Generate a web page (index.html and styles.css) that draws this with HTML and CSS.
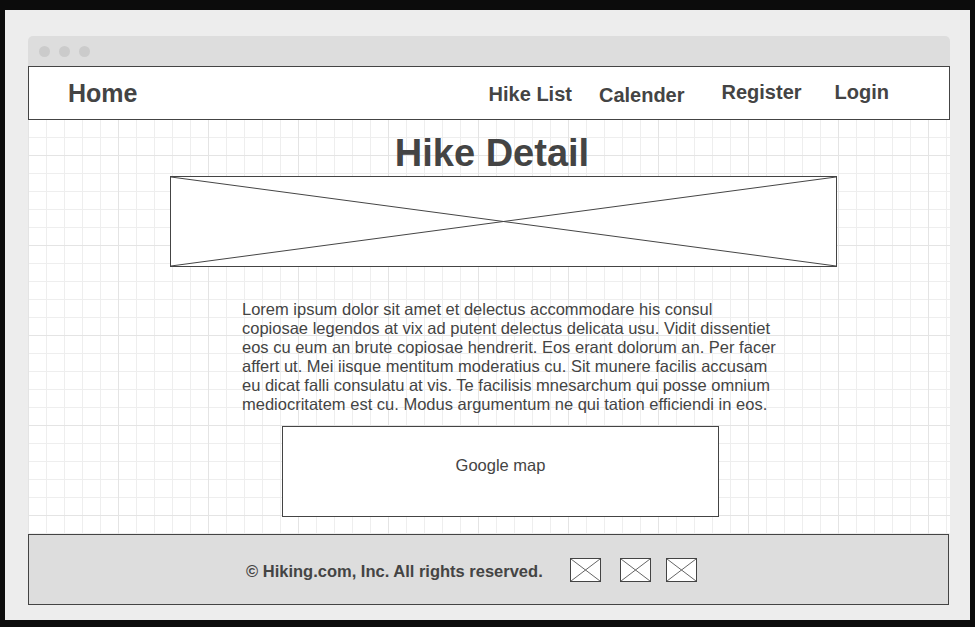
FILE: index.html
```html
<!DOCTYPE html>
<html lang="en">
<head>
<meta charset="utf-8">
<title>Hike Detail</title>
<link rel="stylesheet" href="styles.css">
</head>
<body>
<div class="screen">
  <div class="window">
    <div class="titlebar">
      <span class="dot"></span><span class="dot"></span><span class="dot"></span>
    </div>
    <nav class="nav">
      <a class="brand">Home</a>
      <div class="links">
        <a class="link link-hike">Hike List</a>
        <a class="link link-cal">Calender</a>
        <a class="link link-reg">Register</a>
        <a class="link link-login">Login</a>
      </div>
    </nav>
    <main class="canvas">
      <h1 class="title">Hike Detail</h1>
      <div class="hero">
        <svg class="cross" viewBox="0 0 100 100" preserveAspectRatio="none">
          <line x1="0" y1="0" x2="100" y2="100" vector-effect="non-scaling-stroke"/>
          <line x1="100" y1="0" x2="0" y2="100" vector-effect="non-scaling-stroke"/>
        </svg>
      </div>
      <p class="desc">Lorem ipsum dolor sit amet et delectus accommodare his consul<br>copiosae legendos at vix ad putent delectus delicata usu. Vidit dissentiet<br>eos cu eum an brute copiosae hendrerit. Eos erant dolorum an. Per facer<br>affert ut. Mei iisque mentitum moderatius cu. Sit munere facilis accusam<br>eu dicat falli consulatu at vis. Te facilisis mnesarchum qui posse omnium<br>mediocritatem est cu. Modus argumentum ne qui tation efficiendi in eos.</p>
      <div class="map">Google map</div>
    </main>
    <footer class="footer">
      <span class="copy">© Hiking.com, Inc. All rights reserved.</span>
      <span class="icon icon-1"><svg viewBox="0 0 100 100" preserveAspectRatio="none"><line x1="0" y1="0" x2="100" y2="100" vector-effect="non-scaling-stroke"/><line x1="100" y1="0" x2="0" y2="100" vector-effect="non-scaling-stroke"/></svg></span>
      <span class="icon icon-2"><svg viewBox="0 0 100 100" preserveAspectRatio="none"><line x1="0" y1="0" x2="100" y2="100" vector-effect="non-scaling-stroke"/><line x1="100" y1="0" x2="0" y2="100" vector-effect="non-scaling-stroke"/></svg></span>
      <span class="icon icon-3"><svg viewBox="0 0 100 100" preserveAspectRatio="none"><line x1="0" y1="0" x2="100" y2="100" vector-effect="non-scaling-stroke"/><line x1="100" y1="0" x2="0" y2="100" vector-effect="non-scaling-stroke"/></svg></span>
    </footer>
  </div>
</div>
</body>
</html>
```
FILE: styles.css
```css
* { box-sizing: border-box; }

html, body {
  margin: 0;
  padding: 0;
  background: #0c0c0c;
  font-family: "Liberation Sans", Arial, sans-serif;
  color: #444;
}

.screen {
  margin: 10px 5px 0 5px;
  width: 965px;
  height: 610px;
  background: #ededed;
  padding: 26px 0 0 23px;
}

.window {
  width: 922px;
}

.titlebar {
  height: 30px;
  background: #dddddd;
  border-radius: 5px 5px 0 0;
  display: flex;
  align-items: center;
  padding-left: 11px;
  gap: 9px;
}

.dot {
  width: 11px;
  height: 11px;
  border-radius: 50%;
  background: #cbcbcb;
}

.nav {
  height: 54px;
  width: 922px;
  border: 1px solid #444;
  background: #fff;
  display: flex;
  align-items: center;
  padding: 0 60px 0 39px;
}

.brand {
  font-weight: bold;
  font-size: 25px;
  line-height: 29px;
}

.links {
  margin-left: auto;
  display: flex;
  align-items: center;
}

.link {
  font-weight: bold;
  font-size: 20px;
  line-height: 23px;
}

.link-hike { margin-top: 2px; }
.link-cal { margin-left: 27px; margin-top: 4px; }
.link-reg { margin-left: 37px; margin-bottom: 1px; }
.link-login { margin-left: 33px; margin-bottom: 1px; }

.canvas {
  height: 414px;
  width: 922px;
  background-color: #fff;
  background-image:
    linear-gradient(to right, #e4e4e4 1px, transparent 1px),
    linear-gradient(to bottom, #e4e4e4 1px, transparent 1px),
    linear-gradient(to right, #eeeeee 1px, transparent 1px),
    linear-gradient(to bottom, #eeeeee 1px, transparent 1px);
  background-size: 90px 90px, 90px 90px, 18px 18px, 18px 18px;
  background-position: 0 0, 0 35px, 0 0, 0 -1px;
  display: flex;
  flex-direction: column;
  align-items: flex-start;
  padding-top: 11px;
}

.title {
  margin: 0;
  align-self: center;
  padding-left: 6px;
  font-size: 38px;
  line-height: 44px;
  font-weight: bold;
  color: #444;
}

.hero {
  margin: 1px 0 0 142px;
  width: 667px;
  height: 91px;
  border: 1px solid #444;
  background: #fff;
}

.cross {
  display: block;
  width: 100%;
  height: 100%;
}

.cross line, .icon line {
  stroke: #444;
  stroke-width: 1;
}

.desc {
  margin: 33px 0 0 214px;
  font-size: 16.5px;
  line-height: 19px;
  white-space: nowrap;
  color: #444;
}

.map {
  margin: 12px 0 0 254px;
  width: 437px;
  height: 91px;
  border: 1px solid #444;
  background: #fff;
  padding-top: 29px;
  text-align: center;
  font-size: 16.5px;
  line-height: 18px;
}

.footer {
  width: 921px;
  height: 71px;
  border: 1px solid #444;
  background: #dddddd;
  display: flex;
  align-items: center;
  padding-left: 217px;
}

.copy {
  font-weight: bold;
  font-size: 16.5px;
  line-height: 19px;
  margin-top: 4px;
  white-space: nowrap;
}

.icon {
  width: 31px;
  height: 24px;
  border: 1px solid #444;
  background: #fff;
  display: block;
}

.icon svg {
  display: block;
  width: 100%;
  height: 100%;
}

.icon line { stroke: #666; }

.icon-1 { margin-left: 27px; }
.icon-2 { margin-left: 19px; }
.icon-3 { margin-left: 15px; }
```
